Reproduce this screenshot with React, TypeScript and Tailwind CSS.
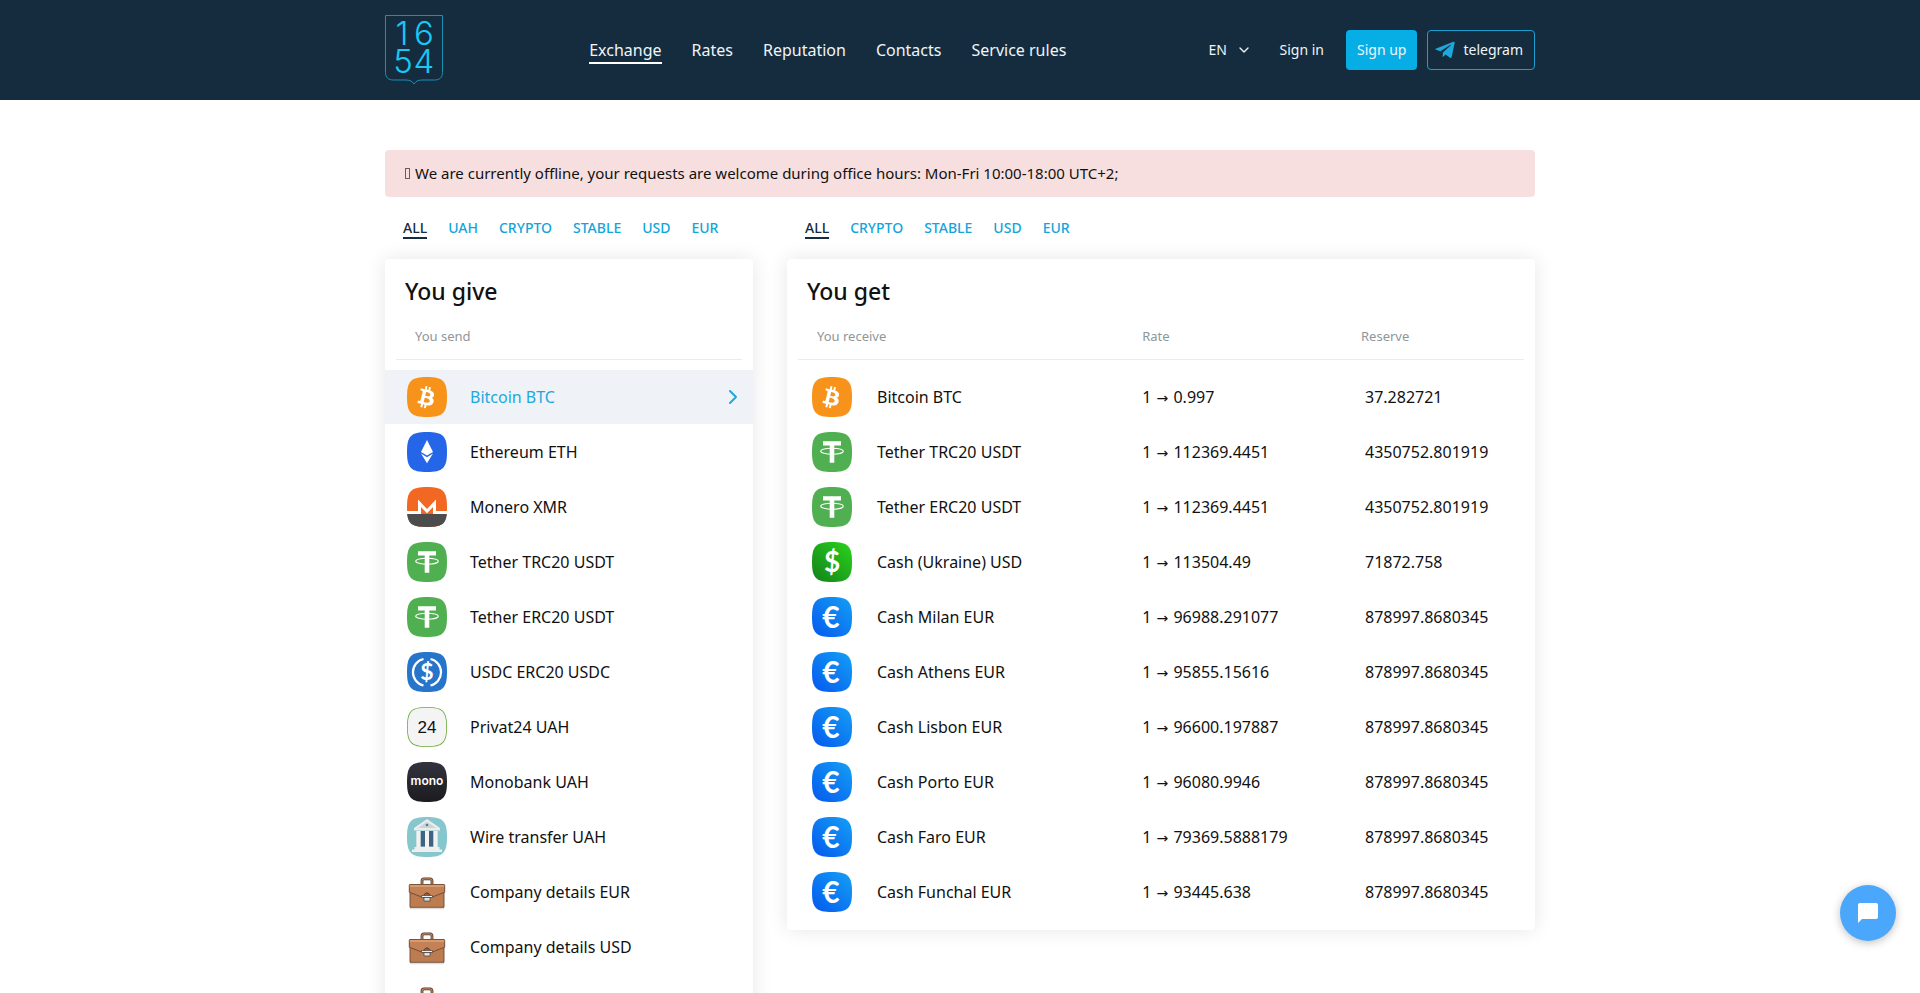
import React, { useState } from 'react'
import { ChevronDown, ChevronRight } from 'lucide-react'
import { FaTelegramPlane } from 'react-icons/fa'
import { MdChatBubble } from 'react-icons/md'

type IconName = 'btc' | 'eth' | 'xmr' | 'usdt' | 'usdc' | 'privat' | 'mono' | 'bank' | 'case' | 'usd' | 'eur'

const navItems = ['Exchange', 'Rates', 'Reputation', 'Contacts', 'Service rules']

const giveTabs = ['ALL', 'UAH', 'CRYPTO', 'STABLE', 'USD', 'EUR']
const getTabs = ['ALL', 'CRYPTO', 'STABLE', 'USD', 'EUR']

const giveList: { name: string; icon: IconName }[] = [
    { name: 'Bitcoin BTC', icon: 'btc' },
    { name: 'Ethereum ETH', icon: 'eth' },
    { name: 'Monero XMR', icon: 'xmr' },
    { name: 'Tether TRC20 USDT', icon: 'usdt' },
    { name: 'Tether ERC20 USDT', icon: 'usdt' },
    { name: 'USDC ERC20 USDC', icon: 'usdc' },
    { name: 'Privat24 UAH', icon: 'privat' },
    { name: 'Monobank UAH', icon: 'mono' },
    { name: 'Wire transfer UAH', icon: 'bank' },
    { name: 'Company details EUR', icon: 'case' },
    { name: 'Company details USD', icon: 'case' },
    { name: 'Company details UAH', icon: 'case' },
]

const getList: { name: string; icon: IconName; rate: string; reserve: string }[] = [
    { name: 'Bitcoin BTC', icon: 'btc', rate: '0.997', reserve: '37.282721' },
    { name: 'Tether TRC20 USDT', icon: 'usdt', rate: '112369.4451', reserve: '4350752.801919' },
    { name: 'Tether ERC20 USDT', icon: 'usdt', rate: '112369.4451', reserve: '4350752.801919' },
    { name: 'Cash (Ukraine) USD', icon: 'usd', rate: '113504.49', reserve: '71872.758' },
    { name: 'Cash Milan EUR', icon: 'eur', rate: '96988.291077', reserve: '878997.8680345' },
    { name: 'Cash Athens EUR', icon: 'eur', rate: '95855.15616', reserve: '878997.8680345' },
    { name: 'Cash Lisbon EUR', icon: 'eur', rate: '96600.197887', reserve: '878997.8680345' },
    { name: 'Cash Porto EUR', icon: 'eur', rate: '96080.9946', reserve: '878997.8680345' },
    { name: 'Cash Faro EUR', icon: 'eur', rate: '79369.5888179', reserve: '878997.8680345' },
    { name: 'Cash Funchal EUR', icon: 'eur', rate: '93445.638', reserve: '878997.8680345' },
]

const TILE = 'M0 20C0 4 4 0 20 0S40 4 40 20 36 40 20 40 0 36 0 20Z'

const Logo = () => (
    <svg width="58" height="70" viewBox="0 0 58 70" fill="none" className="overflow-visible" aria-hidden="true">
        <path
            d="M.5.5h57v57c0 5-3 7.500-8 7.500H37c-4 0-6.500 1.500-8 4-1.500-2.500-4-4-8-4H8.500c-5 0-8-2.500-8-7.500Z"
            stroke="#1c8fb5"
        />
        <g fill="#17c9f7" fontFamily="Inter, sans-serif" fontSize="33" fontWeight="300" textAnchor="middle">
            <text x="17" y="30">1</text>
            <text x="39" y="30">6</text>
            <text x="18" y="58">5</text>
            <text x="39" y="58">4</text>
        </g>
    </svg>
)

const CoinShape = ({ name }: { name: IconName }) => {
    switch (name) {
        case 'btc':
            return (
                <>
                    <path d={TILE} fill="#f7931a" />
                    <path
                        transform="translate(1.1 2.3) scale(1.12)"
                        fill="#fff"
                        d="M23.189 14.02c.314-2.096-1.283-3.223-3.465-3.975l.708-2.84-1.728-.43-.69 2.765c-.454-.114-.92-.22-1.385-.326l.695-2.783L15.596 6l-.708 2.839c-.376-.086-.746-.17-1.104-.26l.002-.009-2.384-.595-.46 1.846s1.283.294 1.256.312c.7.175.826.638.805 1.006l-.806 3.235c.048.012.11.03.18.057l-.183-.045-1.13 4.532c-.086.212-.303.531-.793.41.018.025-1.256-.313-1.256-.313l-.858 1.978 2.25.561c.418.105.828.215 1.231.318l-.715 2.872 1.727.43.708-2.84c.472.127.93.245 1.378.357l-.706 2.828 1.728.43.715-2.866c2.948.558 5.164.333 6.097-2.333.752-2.146-.037-3.385-1.588-4.192 1.13-.26 1.98-1.003 2.207-2.538zm-3.95 5.538c-.533 2.147-4.148.986-5.32.695l.95-3.805c1.172.293 4.929.872 4.37 3.11zm.535-5.569c-.487 1.953-3.495.96-4.47.717l.86-3.45c.975.243 4.118.696 3.61 2.733z"
                    />
                </>
            )
        case 'eth':
            return (
                <>
                    <path d={TILE} fill="#2566e8" />
                    <path d="M20 8l6 12-6 3.600L14 20Z" fill="#fff" />
                    <path d="M20 25.200l6-3.600-6 9.600-6-9.600Z" fill="#fff" />
                </>
            )
        case 'xmr':
            return (
                <>
                    <path d={TILE} fill="#f26822" />
                    <path d="M.2 27C1.200 37.500 6 40 20 40s18.800-2.500 19.800-13Z" fill="#4c4c4c" />
                    <path d="M0 24h11V12.500l9 9.500 9-9.500V24h11v3H26v-7l-6 6.300-6-6.300v7H0Z" fill="#fff" />
                </>
            )
        case 'usdt':
            return (
                <>
                    <path d={TILE} fill="#50af50" />
                    <path d="M11 9.300h18v4.200h-6.700v17.200h-4.600V13.500H11Z" fill="#fff" />
                    <ellipse cx="20" cy="19.200" rx="11.300" ry="3" fill="none" stroke="#fff" strokeWidth="1.100" />
                </>
            )
        case 'usdc':
            return (
                <>
                    <path d={TILE} fill="#2775ca" />
                    <path
                        d="M16.500 7a13.600 13.600 0 0 0 0 26.500M23.500 7a13.600 13.600 0 0 1 0 26.500"
                        fill="none"
                        stroke="#fff"
                        strokeWidth="2.200"
                    />
                    <text x="20" y="28" textAnchor="middle" fontSize="23" fontWeight="700" fontFamily="Lato, sans-serif" fill="#fff">$</text>
                </>
            )
        case 'privat':
            return (
                <>
                    <path d={TILE} fill="#6cab3c" />
                    <path d={TILE} transform="translate(.8 .8) scale(.96)" fill="#f4f4f4" />
                    <text x="20" y="26" textAnchor="middle" fontSize="17" fontFamily="'Liberation Sans', sans-serif" fill="#111">24</text>
                </>
            )
        case 'mono':
            return (
                <>
                    <path d={TILE} fill="url(#monoFill)" />
                    <text x="20" y="23" textAnchor="middle" fontSize="12" fontWeight="600" fontFamily="Inter, sans-serif" fill="#fff">mono</text>
                </>
            )
        case 'bank':
            return (
                <>
                    <path d={TILE} fill="#86c6cd" />
                    <path d="M9 14h22v17H9Z" fill="#b5cdd3" />
                    <path d="M13.500 14h4.700v15.500h-4.700ZM21.800 14h4.700v15.500h-4.700Z" fill="#3d6582" />
                    <path d="M9.500 14h4v16h-4ZM18 14h4v16h-4ZM26.500 14h4v16h-4Z" fill="#f2f2f2" />
                    <path d="M20 2 33 11v2.500H7V11Z" fill="#ececec" />
                    <path d="M20 4.500 29 11H11Z" fill="#cfd3d6" />
                    <circle cx="20" cy="8" r="1.300" fill="#4b7d99" />
                    <path d="M7.500 30h25v2.500H35V35H5v-2.500h2.500Z" fill="#eef0f0" />
                </>
            )
        case 'case':
            return (
                <>
                    <path d="M3 36.500h34" stroke="#dcdcdc" strokeWidth="1.500" />
                    <path d="M15 12V9c0-1.500.8-2.200 2-2.200h6c1.200 0 2 .7 2 2.200v3" fill="none" stroke="#4d3a31" strokeWidth="2.800" />
                    <path d="M15 12V9c0-1.500.8-2.200 2-2.200h6c1.200 0 2 .7 2 2.200v3" fill="none" stroke="#c58459" strokeWidth="1.200" />
                    <path d="M3 16h34v19.300H3Z" fill="#bd7c50" stroke="#6a4733" strokeWidth=".9" />
                    <path d="M3 12.500h34c.5 0 .7.300.7.700v7L24 25.500h-8L2.300 20.200v-7c0-.4.200-.7.7-.7Z" fill="#c58156" stroke="#6a4733" strokeWidth=".9" />
                    <path d="M3 13h34v2H3Z" fill="#d99a6e" />
                    <path d="M17 24c0-4 6-4 6 0" fill="#9a603c" stroke="#4d3a31" />
                    <path d="M14.500 23.500h11v2h-11Z" fill="#f1f1f1" stroke="#4d3a31" strokeWidth=".7" />
                    <path d="M17 25.500h6V29h-6Z" fill="#cfe6ef" stroke="#4d3a31" strokeWidth=".7" />
                </>
            )
        case 'usd':
            return (
                <>
                    <path d={TILE} fill="url(#usdFill)" />
                    <text x="20" y="30" textAnchor="middle" fontSize="28" fontWeight="700" fontFamily="Lato, sans-serif" fill="#fff">$</text>
                </>
            )
        case 'eur':
            return (
                <>
                    <path d={TILE} fill="url(#eurFill)" />
                    <text x="19" y="31" textAnchor="middle" fontSize="30" fontWeight="700" fontFamily="Lato, sans-serif" fill="#fff">€</text>
                </>
            )
    }
}

const CoinIcon = ({ name }: { name: IconName }) => (
    <svg width="40" height="40" viewBox="0 0 40 40" className="block shrink-0" aria-hidden="true">
        <CoinShape name={name} />
    </svg>
)

// Gradients shared by the coin tiles
const IconDefs = () => (
    <svg width="0" height="0" className="absolute" aria-hidden="true">
        <defs>
            <linearGradient id="monoFill" x1="0" y1="0" x2="0" y2="1">
                <stop offset="0" stopColor="#32333f" />
                <stop offset="1" stopColor="#1c1b20" />
            </linearGradient>
            <linearGradient id="usdFill" x1="1" y1="0" x2="0" y2="1">
                <stop offset="0" stopColor="#2bd41d" />
                <stop offset="1" stopColor="#13801a" />
            </linearGradient>
            <linearGradient id="eurFill" x1="1" y1="0" x2="0" y2="1">
                <stop offset="0" stopColor="#14a0f5" />
                <stop offset="1" stopColor="#0558ee" />
            </linearGradient>
        </defs>
    </svg>
)

const Tabs = ({ items }: { items: string[] }) => {
    const [active, setActive] = useState(items[0])

    return (
        <div className="mt-[22px] mb-5 flex flex-wrap gap-[21px] px-[18px] text-sm font-medium">
            {items.map((item) => (
                <button
                    key={item}
                    type="button"
                    onClick={() => setActive(item)}
                    className={
                        item === active
                            ? 'border-b-2 border-[#152c3f] leading-[18px] text-[#152c3f]'
                            : 'border-b-2 border-transparent leading-[18px] text-[#12a5da]'
                    }
                >
                    {item}
                </button>
            ))}
        </div>
    )
}

const Header = () => (
    <header className="bg-[#152c3f] text-[#eef5f9]">
        <div className="mx-auto flex h-[100px] max-w-[1150px] items-center justify-between">
            <a href="#" aria-label="1654">
                <Logo />
            </a>

            {/* Main menu */}
            <nav className="flex gap-[30px] pt-[2px] pl-1 text-base leading-6">
                {navItems.map((item, i) => (
                    <a
                        key={item}
                        href="#"
                        className={i === 0 ? 'border-b-2 border-white' : 'border-b-2 border-transparent'}
                    >
                        {item}
                    </a>
                ))}
            </nav>

            {/* Account */}
            <div className="flex items-center text-sm">
                <div className="relative mr-8 flex items-center">
                    <select aria-label="Language" className="appearance-none bg-transparent pr-5">
                        <option>EN</option>
                    </select>
                    <ChevronDown className="pointer-events-none absolute -right-1 size-4" />
                </div>
                <a href="#" className="mr-[22px]">Sign in</a>
                <a href="#" className="mr-[10px] flex h-10 items-center rounded-[4px] bg-[#07aee6] px-[11px]">
                    Sign up
                </a>
                <a href="#" className="flex h-10 items-center gap-[7px] rounded-[4px] border border-[#1c9fd0] pr-[11px] pl-[6px]">
                    <FaTelegramPlane className="size-[22px] text-[#1fa8dd]" />
                    telegram
                </a>
            </div>
        </div>
    </header>
)

const GivePanel = () => {
    const [selected, setSelected] = useState(0)

    return (
        <section>
            <Tabs items={giveTabs} />
            <div className="rounded-[4px] bg-white pt-4 pb-[11px] shadow-[0_0_20px_rgba(0,0,0,0.1)]">
                <h2 className="px-5 text-[23px] leading-8 font-medium">You give</h2>
                <div className="mx-[11px] mt-[6px] mb-[10px] flex h-[47px] items-center border-b border-[#e9ebec] pt-[2px] pl-[19px] text-[13px] text-[#8f9699]">
                    You send
                </div>
                <ul className="flex flex-col gap-px">
                    {giveList.map((coin, i) => (
                        <li key={coin.name}>
                            <button
                                type="button"
                                onClick={() => setSelected(i)}
                                className={
                                    i === selected
                                        ? 'flex h-[54px] w-full items-center bg-[#eff3f8] pr-2 pl-[22px] text-left text-[#1fa8dc]'
                                        : 'flex h-[54px] w-full items-center pr-2 pl-[22px] text-left'
                                }
                            >
                                <CoinIcon name={coin.icon} />
                                <span className="ml-[23px] grow">{coin.name}</span>
                                {i === selected && <ChevronRight className="size-6" />}
                            </button>
                        </li>
                    ))}
                </ul>
            </div>
        </section>
    )
}

const GetPanel = () => (
    <section>
        <Tabs items={getTabs} />
        <div className="rounded-[4px] bg-white px-[11px] pt-4 pb-[10px] shadow-[0_0_20px_rgba(0,0,0,0.1)]">
            <h2 className="px-[9px] text-[23px] leading-8 font-medium">You get</h2>
            <table className="mt-[6px] w-full table-fixed border-separate border-spacing-0 text-left">
                <thead className="text-[13px] text-[#8f9699]">
                    <tr>
                        <th className="h-[47px] w-[47%] border-b border-[#e9ebec] pt-[2px] pl-[19px] font-normal">You receive</th>
                        <th className="w-[30%] border-b border-[#e9ebec] pt-[2px] pl-[3px] font-normal">Rate</th>
                        <th className="border-b border-[#e9ebec] pt-[2px] pl-1 font-normal">Reserve</th>
                    </tr>
                </thead>
                <tbody className="before:block before:h-[10px] before:content-['']">
                    {getList.map((row) => (
                        <tr key={row.name}>
                            <td className="h-[55px] pb-px pl-[14px]">
                                <div className="flex items-center gap-[25px]">
                                    <CoinIcon name={row.icon} />
                                    {row.name}
                                </div>
                            </td>
                            <td className="pb-px pl-[3px]">
                                1 <span className="mx-px font-['DejaVu_Sans',sans-serif] text-sm leading-4">→</span> {row.rate}
                            </td>
                            <td className="pb-px pl-2">{row.reserve}</td>
                        </tr>
                    ))}
                </tbody>
            </table>
        </div>
    </section>
)

const App = () => {
    return (
        <div className="h-screen overflow-hidden bg-white font-['Noto_Sans',sans-serif] text-base text-[#111]">
            <IconDefs />
            <Header />

            <main className="mx-auto max-w-[1150px] pt-[50px]">
                {/* Office hours notice */}
                <div className="flex h-[47px] items-center gap-[5px] rounded-[4px] bg-[#f8dfdf] px-5 text-[15px]">
                    <span className="h-[11px] w-[5px] border border-[#6b5d5d]" />
                    We are currently offline, your requests are welcome during office hours: Mon-Fri 10:00-18:00 UTC+2;
                </div>

                <div className="grid grid-cols-[92fr_187fr] items-start gap-[34px]">
                    <GivePanel />
                    <GetPanel />
                </div>
            </main>

            {/* Chat widget */}
            <button
                type="button"
                aria-label="Open chat"
                className="fixed right-6 bottom-[52px] flex size-14 items-center justify-center rounded-full bg-[#4ba7fc] text-white shadow-[0_2px_8px_rgba(0,0,0,0.25)]"
            >
                <MdChatBubble className="size-6" />
            </button>
        </div>
    )
}

export default App
